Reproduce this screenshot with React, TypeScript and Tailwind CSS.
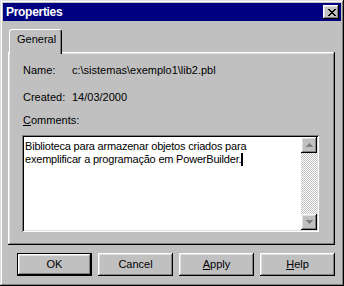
const raised =
  "shadow-[inset_-1px_-1px_#000,inset_1px_1px_#fff,inset_-2px_-2px_#808080,inset_2px_2px_#dfdfdf]";
const windowEdge =
  "shadow-[inset_-1px_-1px_#000,inset_1px_1px_#dfdfdf,inset_-2px_-2px_#808080,inset_2px_2px_#fff]";
const sunken =
  "shadow-[inset_1px_1px_#808080,inset_-1px_-1px_#fff,inset_2px_2px_#000,inset_-2px_-2px_#dfdfdf]";

function CloseGlyph() {
  return (
    <svg width="8" height="7" viewBox="0 0 8 7" shapeRendering="crispEdges">
      <path
        d="M0 0h2v1H0zM6 0h2v1H6zM1 1h2v1H1zM5 1h2v1H5zM2 2h4v1H2zM3 3h2v1H3zM2 4h4v1H2zM1 5h2v1H1zM5 5h2v1H5zM0 6h2v1H0zM6 6h2v1H6z"
        fill="#000"
      />
    </svg>
  );
}

function Arrow({ down }: { down?: boolean }) {
  return (
    <svg width="7" height="4" viewBox="0 0 7 4" shapeRendering="crispEdges">
      <g transform={down ? "rotate(180 3.5 2)" : undefined}>
        <path d="M3 0h1v1H3zM2 1h3v1H2zM1 2h5v1H1zM0 3h7v1H0z" fill="#808080" />
      </g>
    </svg>
  );
}

function Button({ children, isDefault }: { children: React.ReactNode; isDefault?: boolean }) {
  if (isDefault) {
    return (
      <div className="w-[75px] h-[23px] border border-black flex">
        <div className={`flex-1 flex items-center justify-center ${raised}`}>{children}</div>
      </div>
    );
  }
  return (
    <div className={`w-[75px] h-[23px] flex items-center justify-center ${raised}`}>{children}</div>
  );
}

export default function App() {
  return (
    <div
      className={`w-[344px] h-[286px] bg-[#c0c0c0] p-[3px] flex flex-col text-[11px] leading-[13px] text-black ${windowEdge}`}
      style={{ fontFamily: '"Liberation Sans", Arial, sans-serif' }}
    >
      {/* Title bar */}
      <div className="h-[18px] bg-[#000080] flex items-center justify-between pl-[3px] pr-[2px]">
        <span className="text-white font-bold text-[12px] tracking-[-0.3px]">Properties</span>
        <div className={`w-[16px] h-[14px] bg-[#c0c0c0] flex items-center justify-center pl-[1px] ${raised}`}>
          <CloseGlyph />
        </div>
      </div>

      {/* Tab strip */}
      <div className="mt-[8px] ml-[6px] flex">
        <div className="relative z-10 w-[53px] h-[25px] -mb-[2px] bg-[#c0c0c0] border-t border-l border-white border-r border-r-black rounded-t-[3px] shadow-[inset_-1px_0_#808080] pl-[7px] pt-[3px]">
          General
        </div>
      </div>

      {/* Tab panel */}
      <div className={`ml-[5px] w-[327px] h-[193px] pt-[12px] pl-[14px] flex flex-col ${raised}`}>
        <div className="flex h-[13px] pl-[1px]">
          <span className="w-[49px]">Name:</span>
          <span>c:\sistemas\exemplo1\lib2.pbl</span>
        </div>
        <div className="flex h-[13px] mt-[14px] pl-[1px]">
          <span className="w-[49px]">Created:</span>
          <span>14/03/2000</span>
        </div>
        <div className="h-[13px] mt-[10px] pl-[1px]">
          <span className="underline">C</span>omments:
        </div>

        {/* Comments box */}
        <div className={`mt-[8px] w-[297px] h-[97px] bg-white p-[2px] flex ${sunken}`}>
          <div className="flex-1 pl-[1px] pt-[3px] whitespace-nowrap tracking-[-0.2px]">
            Biblioteca para armazenar objetos criados para
            <br />
            exemplificar a programação em PowerBuilder.
            <span className="inline-block w-[2px] h-[13px] bg-black align-top" />
          </div>
          <div className="w-[16px] flex flex-col">
            <div className={`h-[16px] bg-[#c0c0c0] flex items-center justify-center ${raised}`}>
              <Arrow />
            </div>
            <div className="flex-1 bg-[length:2px_2px] bg-[image:conic-gradient(#fff_25%,#c0c0c0_0_50%,#fff_0_75%,#c0c0c0_0)]" />
            <div className={`h-[16px] bg-[#c0c0c0] flex items-center justify-center ${raised}`}>
              <Arrow down />
            </div>
          </div>
        </div>
      </div>

      {/* Buttons */}
      <div className="mt-[8px] ml-[14px] flex gap-[6px]">
        <Button isDefault>OK</Button>
        <Button>Cancel</Button>
        <Button>
          <span>
            <span className="underline">A</span>pply
          </span>
        </Button>
        <Button>
          <span>
            <span className="underline">H</span>elp
          </span>
        </Button>
      </div>
    </div>
  );
}
